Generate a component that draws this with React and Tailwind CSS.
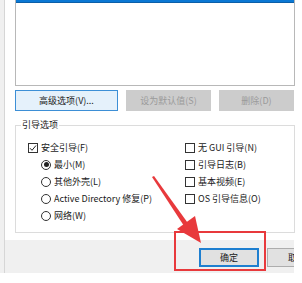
const font = { fontFamily: '"Noto Sans CJK SC", "Noto Sans", sans-serif' };

function Check({ checked, label }) {
  return (
    <div className="flex items-center h-[17px] gap-[3px]">
      <div className="w-[10px] h-[10px] border border-[#333333] bg-white flex items-center justify-center">
        {checked && (
          <svg width="8" height="8" viewBox="0 0 8 8">
            <path d="M1 4.2 L3 6.3 L7 1.5" fill="none" stroke="#222" strokeWidth="1" />
          </svg>
        )}
      </div>
      <span className="text-[9px] leading-none text-[#1a1a1a]">{label}</span>
    </div>
  );
}

function Radio({ checked, label }) {
  return (
    <div className="flex items-center h-[17px] gap-[3px]">
      <div className="w-[10px] h-[10px] rounded-full border border-[#333333] bg-white flex items-center justify-center">
        {checked && <div className="w-[5px] h-[5px] rounded-full bg-[#222]" />}
      </div>
      <span className="text-[9px] leading-none text-[#1a1a1a]">{label}</span>
    </div>
  );
}

export default function App() {
  return (
    <div className="w-[302px] h-[283px] bg-white relative overflow-hidden" style={font}>
      <div className="flex h-[273px]">
        <div className="w-[5px] bg-[#f0f0f0] border-r border-[#d6d6d6]" />
        <div className="flex-1 flex flex-col">
          <div className="flex-1 bg-white pl-[10px] pr-[6px] flex flex-col">
            <div className="w-[280px] h-[86px] border-x border-b border-[#b8b8b8] flex flex-col">
              <div className="h-[3px] bg-[#0a78d4] border-b border-[#0b5fa8]" />
            </div>
            <div className="flex gap-[8px] mt-[4px] h-[21px]">
              <div className="w-[103px] bg-[#e5f1fb] border border-[#3d8fd6] flex items-center justify-center text-[9px] text-[#1a1a1a]">
                高级选项(V)...
              </div>
              <div className="w-[85px] bg-[#cccccc] flex items-center justify-center text-[9px] text-[#9a9a9a]">
                设为默认值(S)
              </div>
              <div className="w-[75px] bg-[#cccccc] flex items-center justify-center text-[9px] text-[#9a9a9a]">
                删除(D)
              </div>
            </div>
            <div className="relative mt-[14px] w-[280px] h-[108px] border border-[#dcdcdc]">
              <span className="absolute left-[5px] -top-[7px] bg-white px-[1px] text-[9px] leading-[12px] text-[#1a1a1a]">
                引导选项
              </span>
              <div className="flex pt-[13px]">
                <div className="w-[169px] pl-[12px] flex flex-col">
                  <Check checked label="安全引导(F)" />
                  <div className="pl-[13px] flex flex-col">
                    <Radio checked label="最小(M)" />
                    <Radio label="其他外壳(L)" />
                    <Radio label="Active Directory 修复(P)" />
                    <Radio label="网络(W)" />
                  </div>
                </div>
                <div className="flex flex-col">
                  <Check label="无 GUI 引导(N)" />
                  <Check label="引导日志(B)" />
                  <Check label="基本视频(E)" />
                  <Check label="OS 引导信息(O)" />
                </div>
              </div>
            </div>
          </div>
          <div className="h-[33px] bg-[#f0f0f0] flex pl-[194px] pt-[8px] gap-[8px] w-[289px] overflow-hidden">
            <div className="w-[60px] h-[19px] shrink-0 bg-[#e1e1e1] border-2 border-[#1e7fd0] flex items-center justify-center text-[9px] text-[#1a1a1a]">
              确定
            </div>
            <div className="w-[60px] h-[19px] shrink-0 bg-[#e1e1e1] border border-[#adadad] flex items-center justify-center text-[9px] text-[#1a1a1a]">
              取消
            </div>
          </div>
        </div>
      </div>
      <div className="absolute left-[174px] top-[231px] w-[92px] h-[40px] border-2 border-[#e8393c]" />
      <svg className="absolute left-0 top-0" width="302" height="283" viewBox="0 0 302 283">
        <path d="M152 177 L154 176 L190 226 L186 229 Z" fill="#e8393c" />
        <path d="M201 243 L177 229 L195 216 Z" fill="#e8393c" />
      </svg>
    </div>
  );
}
